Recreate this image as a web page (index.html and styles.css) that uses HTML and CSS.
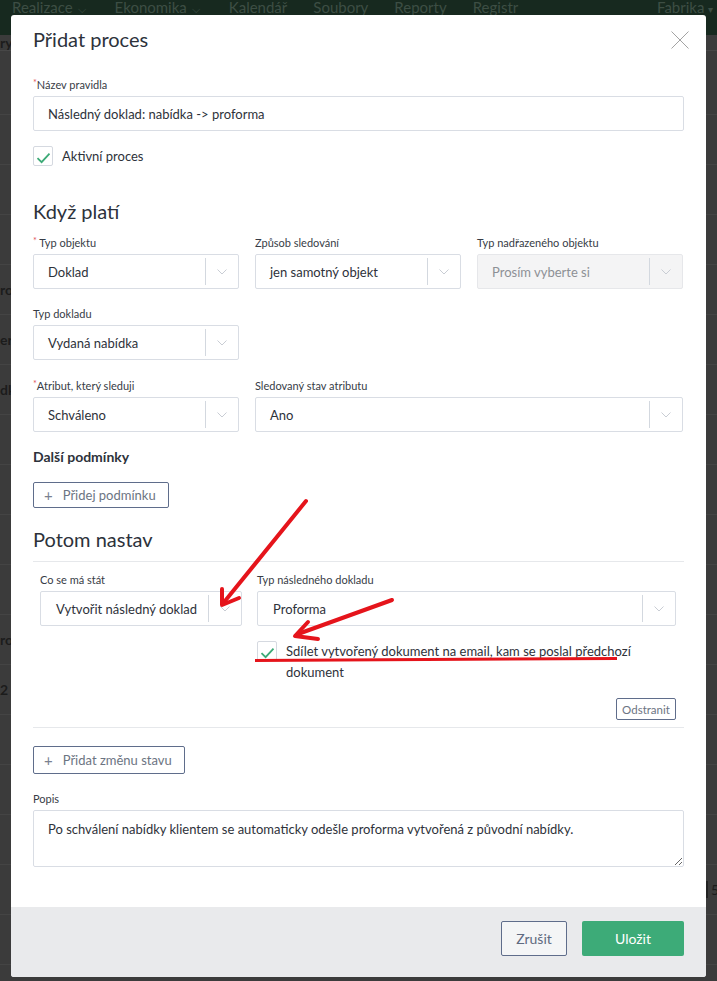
FILE: index.html
```html
<!DOCTYPE html>
<html lang="cs">
<head>
<meta charset="utf-8">
<title>Přidat proces</title>
<link rel="stylesheet" href="styles.css">
</head>
<body>
<div class="page">
  <nav class="topnav">
    <span class="nav-item">Realizace<span class="caret">⌵</span></span>
    <span class="nav-item">Ekonomika<span class="caret">⌵</span></span>
    <span class="nav-item">Kalendář</span>
    <span class="nav-item">Soubory</span>
    <span class="nav-item">Reporty</span>
    <span class="nav-item">Registr</span>
    <span class="nav-spacer"></span>
    <span class="nav-item nav-last">Fabrika <span class="caret-s">▾</span></span>
  </nav>
  <div class="bg-head"><span class="bg-cell">ry</span></div>
  <div class="bg-rows">
    <div class="bg-row"><span class="bg-cell"></span></div>
    <div class="bg-row"><span class="bg-cell"></span></div>
    <div class="bg-row"><span class="bg-cell"></span></div>
    <div class="bg-row"><span class="bg-cell"></span></div>
    <div class="bg-row"><span class="bg-cell">ro</span></div>
    <div class="bg-row"><span class="bg-cell">er</span></div>
    <div class="bg-row"><span class="bg-cell">dk</span></div>
    <div class="bg-row"><span class="bg-cell"></span></div>
    <div class="bg-row"><span class="bg-cell"></span></div>
    <div class="bg-row"><span class="bg-cell"></span></div>
    <div class="bg-row"><span class="bg-cell"></span></div>
    <div class="bg-row"><span class="bg-cell">ro</span></div>
    <div class="bg-row"><span class="bg-cell">2</span></div>
    <div class="bg-row"><span class="bg-cell"></span></div>
    <div class="bg-row"><span class="bg-cell"></span></div>
    <div class="bg-row"><span class="bg-cell"></span></div>
    <div class="bg-row"><span class="bg-cell"></span><span class="bg-right">5</span></div>
    <div class="bg-row"><span class="bg-cell"></span></div>
  </div>
</div>

<div class="modal">
  <div class="modal-header">
    <h1 class="modal-title">Přidat proces</h1>
    <button class="close" aria-label="Zavřít">
      <svg width="18" height="18" viewBox="0 0 18 18"><path d="M0.5 0.5L17.5 17.5M17.5 0.5L0.5 17.5" stroke="#a3a3a3" stroke-width="1" fill="none"/></svg>
    </button>
  </div>

  <div class="modal-body">
    <div class="field f-name">
      <label class="lbl"><span class="req">*</span>Název pravidla</label>
      <div class="input">Následný doklad: nabídka -&gt; proforma</div>
    </div>

    <div class="check-row c-active">
      <span class="checkbox"><svg width="15" height="12" viewBox="0 0 15 12"><path d="M1.5 6.2L5.6 10.2L13.5 1.6" stroke="#3daa77" stroke-width="1.8" fill="none"/></svg></span>
      <span class="check-text">Aktivní proces</span>
    </div>

    <h2 class="section-title s-when">Když platí</h2>

    <div class="grid3 r1">
      <div class="field">
        <label class="lbl"><span class="req">*</span> Typ objektu</label>
        <div class="select"><span class="sel-val">Doklad</span><span class="sel-sep"></span><span class="sel-arrow"><svg width="10" height="6" viewBox="0 0 10 6"><path d="M0.5 0.5L5 5L9.5 0.5" stroke="#c9cdd4" fill="none"/></svg></span></div>
      </div>
      <div class="field">
        <label class="lbl">Způsob sledování</label>
        <div class="select"><span class="sel-val">jen samotný objekt</span><span class="sel-sep"></span><span class="sel-arrow"><svg width="10" height="6" viewBox="0 0 10 6"><path d="M0.5 0.5L5 5L9.5 0.5" stroke="#c9cdd4" fill="none"/></svg></span></div>
      </div>
      <div class="field">
        <label class="lbl">Typ nadřazeného objektu</label>
        <div class="select disabled"><span class="sel-val">Prosím vyberte si</span><span class="sel-sep"></span><span class="sel-arrow"><svg width="10" height="6" viewBox="0 0 10 6"><path d="M0.5 0.5L5 5L9.5 0.5" stroke="#c9cdd4" fill="none"/></svg></span></div>
      </div>
    </div>

    <div class="grid3 r2">
      <div class="field">
        <label class="lbl">Typ dokladu</label>
        <div class="select"><span class="sel-val">Vydaná nabídka</span><span class="sel-sep"></span><span class="sel-arrow"><svg width="10" height="6" viewBox="0 0 10 6"><path d="M0.5 0.5L5 5L9.5 0.5" stroke="#c9cdd4" fill="none"/></svg></span></div>
      </div>
    </div>

    <div class="grid3 r3">
      <div class="field">
        <label class="lbl"><span class="req">*</span>Atribut, který sleduji</label>
        <div class="select"><span class="sel-val">Schváleno</span><span class="sel-sep"></span><span class="sel-arrow"><svg width="10" height="6" viewBox="0 0 10 6"><path d="M0.5 0.5L5 5L9.5 0.5" stroke="#c9cdd4" fill="none"/></svg></span></div>
      </div>
      <div class="field span2">
        <label class="lbl">Sledovaný stav atributu</label>
        <div class="select"><span class="sel-val">Ano</span><span class="sel-sep"></span><span class="sel-arrow"><svg width="10" height="6" viewBox="0 0 10 6"><path d="M0.5 0.5L5 5L9.5 0.5" stroke="#c9cdd4" fill="none"/></svg></span></div>
      </div>
    </div>

    <h3 class="sub-title">Další podmínky</h3>
    <button class="btn-outline b-cond"><span class="plus">+</span>Přidej podmínku</button>

    <h2 class="section-title s-then">Potom nastav</h2>

    <div class="action-block">
      <div class="grid2">
        <div class="field">
          <label class="lbl">Co se má stát</label>
          <div class="select s2"><span class="sel-val">Vytvořit následný doklad</span><span class="sel-sep"></span><span class="sel-arrow"><svg width="10" height="6" viewBox="0 0 10 6"><path d="M0.5 0.5L5 5L9.5 0.5" stroke="#c9cdd4" fill="none"/></svg></span></div>
        </div>
        <div class="field">
          <label class="lbl">Typ následného dokladu</label>
          <div class="select s2"><span class="sel-val">Proforma</span><span class="sel-sep"></span><span class="sel-arrow"><svg width="10" height="6" viewBox="0 0 10 6"><path d="M0.5 0.5L5 5L9.5 0.5" stroke="#c9cdd4" fill="none"/></svg></span></div>
          <div class="check-row c-share">
            <span class="checkbox"><svg width="15" height="12" viewBox="0 0 15 12"><path d="M1.5 6.2L5.6 10.2L13.5 1.6" stroke="#3daa77" stroke-width="1.8" fill="none"/></svg></span>
            <span class="check-text wrap">Sdílet vytvořený dokument na email, kam se poslal předchozí dokument</span>
          </div>
        </div>
      </div>
      <div class="remove-row"><button class="btn-small">Odstranit</button></div>
    </div>

    <button class="btn-outline b-state"><span class="plus">+</span>Přidat změnu stavu</button>

    <div class="field f-desc">
      <label class="lbl">Popis</label>
      <textarea class="textarea">Po schválení nabídky klientem se automaticky odešle proforma vytvořená z původní nabídky.</textarea>
    </div>
  </div>

  <div class="modal-footer">
    <button class="btn-cancel">Zrušit</button>
    <button class="btn-save">Uložit</button>
  </div>
</div>

<svg class="annot" width="717" height="981" viewBox="0 0 717 981">
  <g stroke="#e5141b" stroke-width="4" stroke-linecap="round" stroke-linejoin="round" fill="none">
    <path d="M306 501L225 601"/>
    <path d="M222 589L222 605L239 598"/>
    <path d="M392 600L298 634"/>
    <path d="M308 622L295 636L318 639"/>
  </g>
  <path d="M255 660.5L617 658.5" stroke="#e5141b" stroke-width="3" fill="none"/>
</svg>
</body>
</html>
```

FILE: styles.css
```css
* { box-sizing: border-box; }
html, body { margin: 0; padding: 0; }
body {
  width: 717px;
  height: 981px;
  overflow: hidden;
  background: #3b3b3b;
  font-family: Lato, "Noto Sans", sans-serif;
  position: relative;
}

/* background page (dimmed) */
.page { width: 717px; }
.topnav {
  height: 35px;
  background: #17291f;
  display: flex;
  align-items: flex-start;
  padding: 0 0 0 12px;
  font-size: 15px;
  color: #3d4e44;
  line-height: 14px;
}
.nav-item { margin-right: 26px; white-space: nowrap; }
.nav-item .caret { font-size: 11px; margin-left: 5px; margin-right: 3px; }
.nav-item .caret-s { font-size: 10px; }
.nav-spacer { flex: 1; }
.nav-last { margin-right: 0; width: 60px; overflow: hidden; }
.bg-head {
  height: 16px;
  display: flex;
  align-items: center;
  border-bottom: 1px solid #474747;
}
.bg-cell {
  width: 11px;
  display: flex;
  white-space: nowrap;
  font-size: 14px;
  font-weight: 700;
  color: #1c1c1c;
}
.bg-right {
  margin-left: auto;
  width: 11px;
  padding-left: 3px;
  font-size: 14px;
  color: #1c1c1c;
  border-left: 2px solid #222;
}
.bg-rows { display: flex; flex-direction: column; margin-top: 14px; }
.bg-row {
  height: 50px;
  display: flex;
  align-items: center;
  border-bottom: 1px solid #444444;
}

/* modal */
.modal {
  position: absolute;
  left: 11px;
  top: 15px;
  width: 695px;
  height: 962px;
  background: #ffffff;
  border-radius: 3px;
  display: flex;
  flex-direction: column;
  overflow: hidden;
}
.modal-header {
  display: flex;
  justify-content: space-between;
  align-items: flex-start;
  padding: 11px 17px 0 22px;
}
.modal-title {
  margin: 0;
  font-size: 20px;
  line-height: 26px;
  font-weight: 400;
  color: #2d323b;
}
.close {
  border: 0;
  background: none;
  padding: 0;
  margin-top: 5px;
  width: 18px;
  height: 18px;
  display: block;
}
.close svg { display: block; }

.modal-body {
  flex: 1;
  padding: 0 22px;
  display: flex;
  flex-direction: column;
  align-items: flex-start;
}
.modal-body > * { flex-shrink: 0; }

.field { display: flex; flex-direction: column; width: 100%; }
.lbl {
  font-size: 11px;
  line-height: 15px;
  color: #373c46;
  margin-bottom: 4px;
  white-space: nowrap;
}
.req { color: #e0525a; font-size: 9px; vertical-align: top; line-height: 12px; }

.f-name { margin-top: 25px; }
.input {
  height: 35px;
  border: 1px solid #d9dde4;
  border-radius: 2px;
  padding: 0 14px;
  display: flex;
  align-items: center;
  font-size: 13px;
  color: #2e323a;
}

.check-row { display: flex; align-items: flex-start; gap: 9px; }
.c-active { margin-top: 15px; align-items: center; }
.checkbox {
  width: 20px;
  height: 20px;
  border: 1px solid #d5d9e0;
  border-radius: 2px;
  display: flex;
  align-items: center;
  justify-content: center;
  flex-shrink: 0;
  background: #fff;
}
.checkbox svg { display: block; margin-top: 3px; }
.check-text { font-size: 13px; color: #2e323a; line-height: 20px; }
.check-text.wrap { line-height: 21px; margin-top: 0; }

.section-title {
  margin: 0;
  font-size: 20px;
  line-height: 26px;
  font-weight: 400;
  color: #2d323b;
}
.s-when { margin-top: 32px; }

.grid3 {
  width: 100%;
  display: grid;
  grid-template-columns: 206px 206px 206px;
  column-gap: 16px;
}
.span2 { grid-column: span 2; }
.r1 { margin-top: 11px; }
.r2 { margin-top: 17px; }
.r3 { margin-top: 18px; }

.select {
  height: 35px;
  border: 1px solid #d9dde4;
  border-radius: 2px;
  display: flex;
  align-items: stretch;
  font-size: 13px;
  color: #2e323a;
  background: #fff;
}
.sel-val {
  flex: 1;
  display: flex;
  align-items: center;
  padding-left: 14px;
  white-space: nowrap;
  overflow: hidden;
}
.sel-sep {
  width: 1px;
  background: #d3d8df;
  margin: 3px 0;
}
.sel-arrow {
  width: 32px;
  display: flex;
  align-items: center;
  justify-content: center;
}
.sel-arrow svg { display: block; }
.select.disabled {
  background: #f4f4f5;
  border-color: #e6e7ea;
  color: #8d9096;
}
.select.s2 .sel-val { padding-left: 15px; }

.sub-title {
  margin: 16px 0 0;
  font-size: 14px;
  line-height: 18px;
  font-weight: 700;
  color: #2d323b;
}

.btn-outline {
  font-family: inherit;
  background: #fff;
  border: 1px solid #5f6d8b;
  border-radius: 2px;
  color: #6c7482;
  font-size: 13px;
  display: flex;
  align-items: center;
  white-space: nowrap;
  padding: 0 12px 0 10px;
}
.plus { font-size: 15px; margin-right: 10px; color: #7a8190; }
.b-cond { margin-top: 16px; height: 26px; }
.s-then {
  margin-top: 18px;
  width: 100%;
  padding-bottom: 9px;
  border-bottom: 1px solid #e6e8eb;
}

.action-block {
  width: 100%;
  padding: 10px 8px 7px 7px;
  border-bottom: 1px solid #e6e8eb;
}
.grid2 {
  display: grid;
  grid-template-columns: 202px 1fr;
  column-gap: 15px;
}
.c-share { margin-top: 15px; }
.remove-row { display: flex; justify-content: flex-end; margin-top: 15px; }
.btn-small {
  font-family: inherit;
  height: 22px;
  width: 60px;
  padding: 0;
  background: #fff;
  border: 1px solid #5f6d8b;
  border-radius: 2px;
  color: #6c7482;
  font-size: 11.5px;
}

.b-state { margin-top: 18px; height: 28px; }

.f-desc { margin-top: 17px; }
.textarea {
  height: 57px;
  border: 1px solid #d9dde4;
  border-radius: 2px;
  padding: 10px 14px;
  font-family: inherit;
  font-size: 13px;
  color: #2e323a;
  resize: both;
  width: 100%;
  line-height: 16px;
}

.modal-footer {
  height: 70px;
  background: #e9eaec;
  display: flex;
  justify-content: flex-end;
  align-items: flex-start;
  padding: 14px 22px 0 0;
  gap: 15px;
}
.btn-cancel {
  font-family: inherit;
  height: 35px;
  width: 66px;
  background: #f4f5f6;
  border: 1px solid #5f6d8b;
  border-radius: 2px;
  color: #5f6a80;
  font-size: 14px;
}
.btn-save {
  font-family: inherit;
  height: 35px;
  width: 102px;
  background: #3dab78;
  border: 0;
  border-radius: 2px;
  color: #ffffff;
  font-size: 14px;
}

.annot {
  position: absolute;
  left: 0;
  top: 0;
  pointer-events: none;
}
```
